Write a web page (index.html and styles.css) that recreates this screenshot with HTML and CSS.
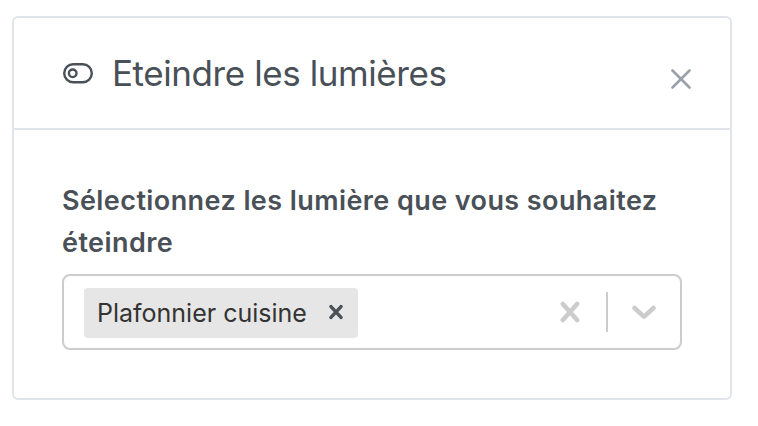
FILE: index.html
```html
<!DOCTYPE html>
<html lang="fr">
<head>
<meta charset="utf-8">
<title>Eteindre les lumières</title>
<link rel="stylesheet" href="styles.css">
</head>
<body>
<section class="card">
  <header class="card-header">
    <svg class="toggle-icon" viewBox="0 0 30 22"><rect x="1.2" y="2.2" width="27.6" height="18" rx="9"/><circle cx="9.7" cy="11.3" r="3.8"/></svg>
    <h1 class="title">Eteindre les lumières</h1>
    <button class="close" aria-label="Fermer"><svg viewBox="0 0 20 20"><path d="M1.5 1.5L18.5 18.5M18.5 1.5L1.5 18.5"/></svg></button>
  </header>
  <div class="card-body">
    <label class="label"><span class="line">Sélectionnez les lumière que vous souhaitez</span> <span class="line">éteindre</span></label>
    <div class="select">
      <div class="chip">
        <span class="chip-text">Plafonnier cuisine</span>
        <svg class="chip-remove" viewBox="0 0 14 16"><path d="M2 2.6L12 13.4M12 2.6L2 13.4"/></svg>
      </div>
      <div class="indicators">
        <svg class="clear" viewBox="0 0 20 22"><path d="M2.9 2.9L17.1 19.1M17.1 2.9L2.9 19.1"/></svg>
        <span class="separator"></span>
        <svg class="chevron" viewBox="0 0 24 16"><path d="M2.5 3L12 11.6L21.5 3"/></svg>
      </div>
    </div>
  </div>
</section>
</body>
</html>
```
FILE: styles.css
```css
* { box-sizing: border-box; }
body {
  margin: 0;
  padding: 16px 26px 0 12px;
  background: #fff;
  color: #495057;
  font-family: Inter, "Liberation Sans", sans-serif;
}
svg { display: block; fill: none; stroke: currentColor; stroke-linecap: round; }
.card {
  height: 384px;
  border: 2px solid #e0e5ec;
  border-radius: 6px;
}
.card-header {
  display: flex;
  align-items: center;
  height: 112px;
  padding: 0 39px 0 49px;
  border-bottom: 2px solid #e0e5ec;
}
.toggle-icon { width: 30px; height: 22px; stroke-width: 2.4; }
.title {
  margin: 0 0 0 19px;
  font-size: 35px;
  font-weight: 400;
  line-height: 44px;
  letter-spacing: -0.42px;
  white-space: nowrap;
}
.close {
  margin: 11px 0 0 auto;
  padding: 0;
  border: 0;
  background: none;
  color: #9aa0ac;
}
.close svg { width: 20px; height: 20px; stroke-width: 2.6; }
.card-body { padding: 50px 48px 0; }
.label {
  display: block;
  padding-left: 0;
  font-size: 27px;
  font-weight: 600;
  line-height: 42px;
}
.line { display: block; letter-spacing: 0.42px; white-space: nowrap; }
.select {
  display: flex;
  align-items: center;
  justify-content: space-between;
  height: 76px;
  margin-top: 10px;
  padding: 0 24px 0 20px;
  border: 2px solid #ccc;
  border-radius: 8px;
}
.chip {
  display: flex;
  align-items: center;
  justify-content: space-between;
  width: 274px;
  height: 50px;
  margin-top: 2px;
  padding: 0 15px 0 13px;
  border-radius: 4px;
  background: #e6e6e6;
}
.chip-text { color: #333; font-size: 25px; line-height: 30px; white-space: nowrap; }
.chip-remove { width: 14px; height: 16px; margin-top: -2px; stroke-width: 3.4; }
.indicators { display: flex; align-items: center; color: #ccc; }
.clear { width: 20px; height: 22px; stroke-width: 4.6; }
.separator { width: 2px; height: 40px; margin: 0 24px 0 26px; background: #ccc; }
.chevron { width: 24px; height: 16px; margin-top: 2px; stroke-width: 4.6; stroke-linejoin: round; }
```
